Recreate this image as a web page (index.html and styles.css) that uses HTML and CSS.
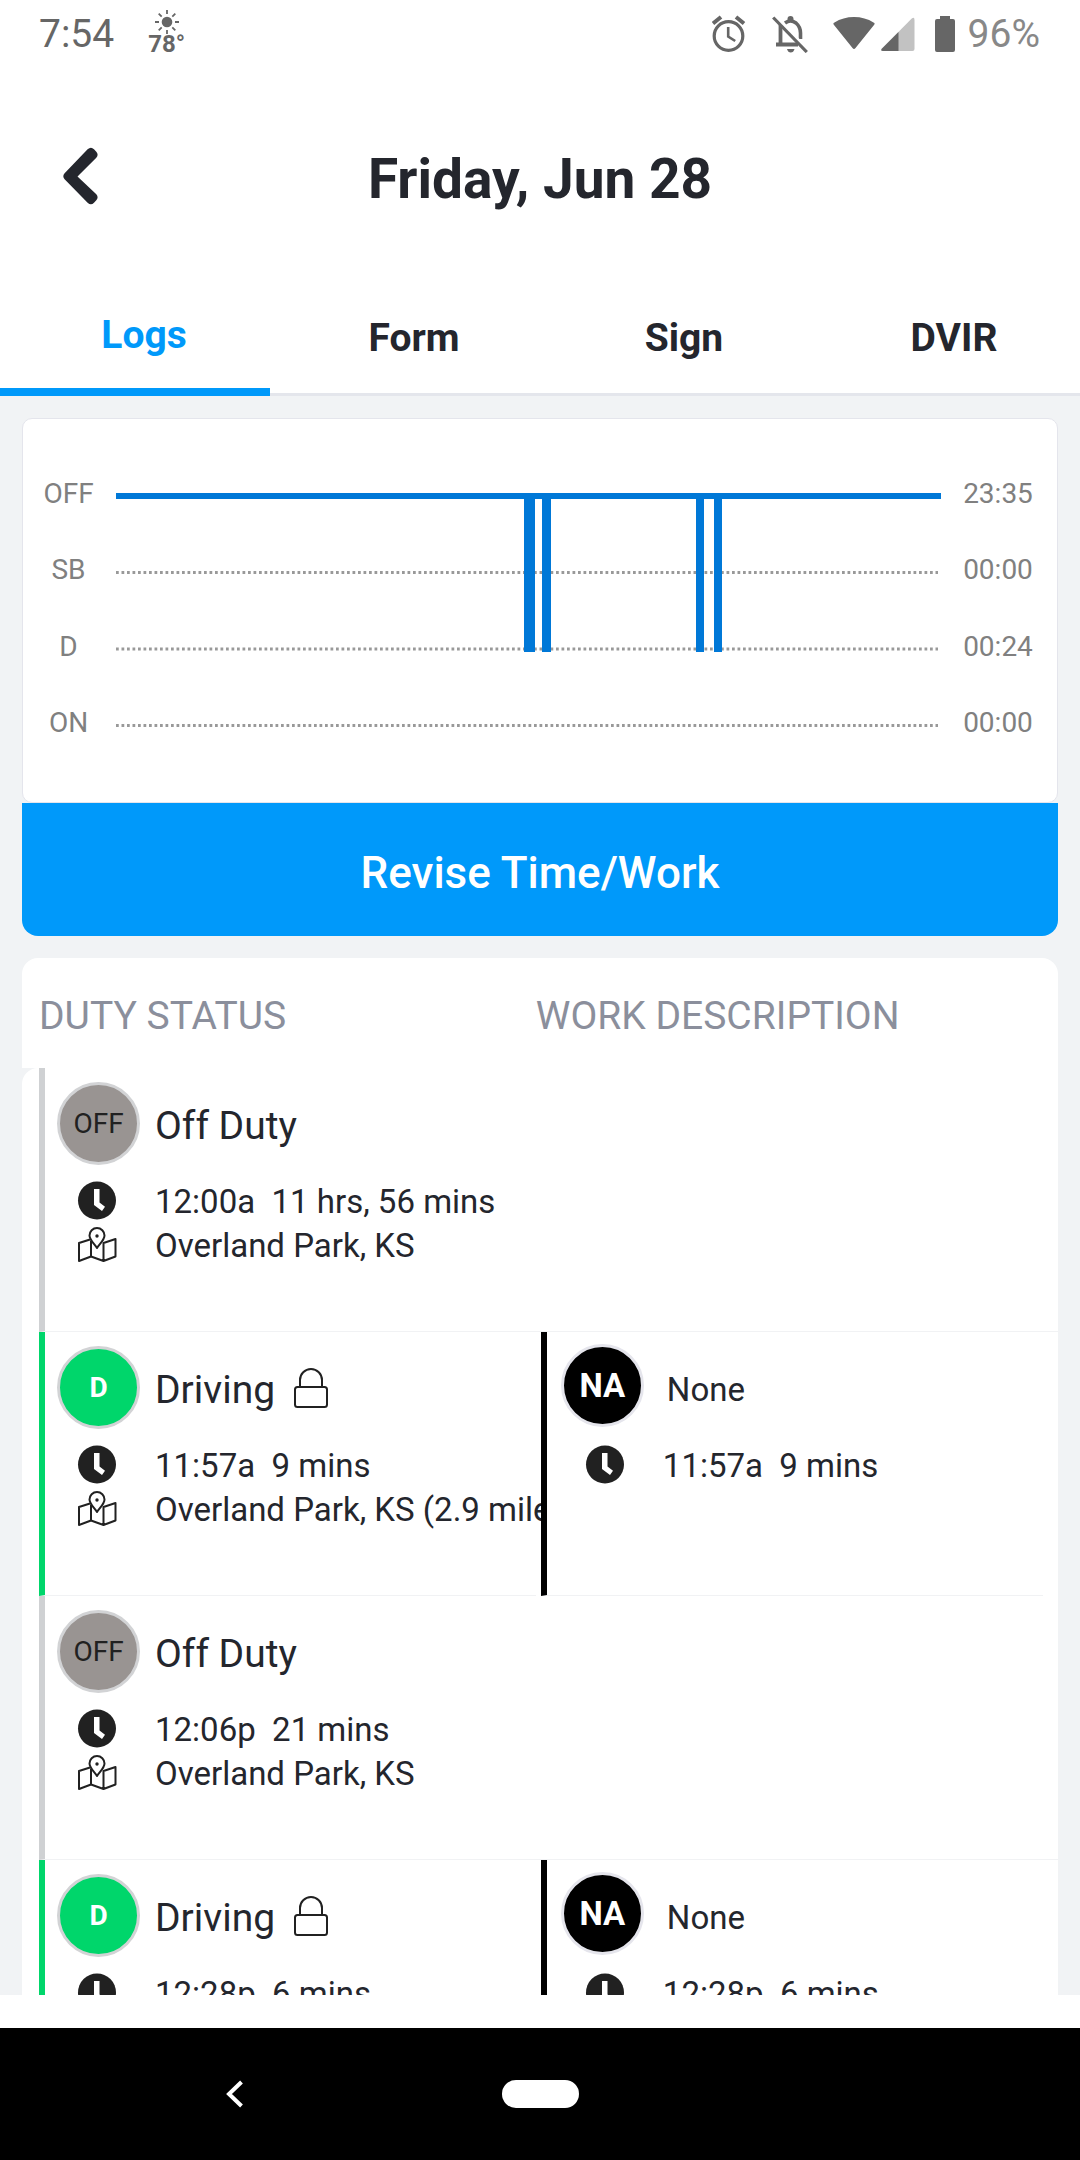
FILE: index.html
```html
<!DOCTYPE html>
<html lang="en">
<head>
  <meta charset="UTF-8" />
  <title>Driver Logs</title>
  <meta name="viewport" content="width=device-width, initial-scale=1.0" />

  <link rel="stylesheet" href="styles.css">
</head>
<body>
  <!-- Shared icons -->
  <svg class="sprite" aria-hidden="true">
    <symbol id="icon-clock" viewBox="0 0 40 44">
      <circle cx="20" cy="20.500" r="19" fill="#212121" />
      <path d="M17 9h5.500v13.500l5.500 4.200-3 4.300-8-6z" fill="#fff" />
    </symbol>
    <symbol id="icon-map" viewBox="0 0 40 44">
      <g fill="none" stroke="#212121" stroke-width="2" stroke-linejoin="round">
        <path d="M13 15.500L2 19v18l12-4.500 12.500 4.500 12-4.500V15l-12 4v18M14 17v15.500" />
        <path d="M20 24c-2.500-4-7.500-8-7.500-12.500a7.500 7.500 0 0 1 15 0c0 4.500-5 8.500-7.500 12.500z" fill="#fff" />
      </g>
      <circle cx="20" cy="12" r="1.700" fill="#212121" />
    </symbol>
    <symbol id="icon-lock" viewBox="0 0 36 42">
      <g fill="none" stroke="#212121" stroke-width="2">
        <rect x="2" y="20" width="32" height="20" rx="2.500" />
        <path d="M7 20v-7a11 11 0 0 1 22 0v7" />
      </g>
    </symbol>
  </svg>

  <div class="status-bar">
    <span class="clock">7:54</span>
    <span class="weather">
      <svg width="24" height="24" viewBox="0 0 24 24" aria-hidden="true">
        <circle cx="12" cy="12" r="5.300" fill="#666" />
        <path d="M12 0v4M12 20v4M0 12h4M20 12h4M3.700 3.700l3 3M17.300 17.300l3 3M3.700 20.300l3-3M17.300 6.700l3-3" stroke="#666" stroke-width="1.800" />
      </svg>
      <span class="temp">78°</span>
    </span>

    <div class="status-icons">
      <svg width="34" height="38" viewBox="0 0 34 38" aria-hidden="true">
        <g fill="none" stroke="#666" stroke-width="3.200">
          <circle cx="16.500" cy="21" r="14.300" />
          <path d="M1 8.500l8-6.500M32 8.500L24 2" stroke-width="4" />
          <path d="M16.200 12v9.500l7 4.500" stroke-width="2.600" />
        </g>
      </svg>
      <svg class="bell" width="36" height="38" viewBox="0 0 36 38" aria-hidden="true">
        <path d="M8.500 10v20M4 29.500h22" fill="none" stroke="#666" stroke-width="3.800" />
        <path d="M13 8q5.500-4 11 0 4.500 4 4.500 10v6" fill="none" stroke="#666" stroke-width="3.600" />
        <circle cx="18.500" cy="4" r="3" fill="#666" />
        <path d="M15 34h7.500q-1 3.600-3.750 3.600T15 34z" fill="#666" />
        <path d="M3.600 1.500l33 34" stroke="#fff" stroke-width="3" />
        <path d="M1.200 2.500l33.600 34.500" stroke="#666" stroke-width="3.200" />
      </svg>
      <svg class="wifi" width="42" height="38" viewBox="0 0 42 38" aria-hidden="true">
        <path d="M1 10Q-.5 8.500 1.500 7.500 10 2 21 2t19.500 5.500q2 1 .5 2.500L22.500 33q-1.500 1.800-3 0z" fill="#666" />
      </svg>
      <svg class="signal" width="34" height="38" viewBox="0 0 34 38" aria-hidden="true">
        <path d="M1 33.500L30.500 3.700Q33.500 1.500 33.500 5v29q0 2-2 2H2q-3 0-1-2.500z" fill="#c2c2c2" />
        <path d="M1 33.500L17.500 17v19H2q-3 0-1-2.500z" fill="#666" />
      </svg>
      <svg class="battery" width="20" height="38" viewBox="0 0 20 38" aria-hidden="true">
        <path d="M5 1h10v3h3q2 0 2 2v29q0 2-2 2H2q-2 0-2-2V6q0-2 2-2h3z" fill="#666" />
      </svg>
      <span class="percent">96%</span>
    </div>
  </div>

  <header class="header">
    <button class="back" aria-label="Back">
      <svg width="36" height="58" viewBox="0 0 36 58" aria-hidden="true">
        <path d="M24.600 2.200q3.400-3 6.400 0l2.300 2.500q2.600 3 0 6L14.500 29.500l18.800 17.800q2.600 3 0 6L31 55.800q-3 3-6.400 0L1.600 32.300q-2.600-3 0-6z" fill="#24262d" />
      </svg>
    </button>
    <h1>Friday, Jun 28</h1>
  </header>

  <nav class="tabs">
    <a href="#logs" class="tab active">Logs</a>
    <a href="#form" class="tab">Form</a>
    <a href="#sign" class="tab">Sign</a>
    <a href="#dvir" class="tab">DVIR</a>
  </nav>

  <main class="content">
    <section class="chart">
      <div class="chart-labels">
        <span>OFF</span>
        <span>SB</span>
        <span>D</span>
        <span>ON</span>
      </div>
      <svg class="plot" viewBox="0 0 825 306" preserveAspectRatio="none" role="img" aria-label="Hours of service">
        <path d="M0 117.500h822M0 194h822M0 270.500h822" stroke="#999" stroke-width="3" stroke-dasharray="2.750 2.750" />
        <g fill="#0078d7">
          <rect x="0" y="38" width="825" height="6" />
          <rect x="408" y="40" width="11" height="157" />
          <rect x="426" y="40" width="9" height="157" />
          <rect x="580" y="40" width="8" height="157" />
          <rect x="598" y="40" width="8" height="157" />
        </g>
      </svg>
      <div class="chart-labels">
        <span>23:35</span>
        <span>00:00</span>
        <span>00:24</span>
        <span>00:00</span>
      </div>
    </section>
    <button class="revise">Revise Time/Work</button>

    <table class="log">
      <thead>
        <tr>
          <th>DUTY STATUS</th>
          <th>WORK DESCRIPTION</th>
        </tr>
      </thead>
      <tbody>
        <tr>
          <td>
            <div class="duty off">
              <div class="entry-head"><span class="badge">OFF</span><span class="name">Off Duty</span></div>
              <div class="line"><svg class="icon"><use href="#icon-clock" /></svg>12:00a&nbsp; 11 hrs, 56 mins</div>
              <div class="line"><svg class="icon"><use href="#icon-map" /></svg>Overland Park, KS</div>
            </div>
          </td>
          <td class="empty"></td>
        </tr>
        <tr>
          <td>
            <div class="duty driving">
              <div class="entry-head"><span class="badge">D</span><span class="name">Driving</span><svg class="lock"><use href="#icon-lock" /></svg></div>
              <div class="line"><svg class="icon"><use href="#icon-clock" /></svg>11:57a&nbsp; 9 mins</div>
              <div class="line"><svg class="icon"><use href="#icon-map" /></svg>Overland Park, KS (2.9 miles)</div>
            </div>
          </td>
          <td>
            <div class="work">
              <div class="entry-head"><span class="badge">NA</span><span class="name">None</span></div>
              <div class="line"><svg class="icon"><use href="#icon-clock" /></svg>11:57a&nbsp; 9 mins</div>
            </div>
          </td>
        </tr>
        <tr>
          <td>
            <div class="duty off">
              <div class="entry-head"><span class="badge">OFF</span><span class="name">Off Duty</span></div>
              <div class="line"><svg class="icon"><use href="#icon-clock" /></svg>12:06p&nbsp; 21 mins</div>
              <div class="line"><svg class="icon"><use href="#icon-map" /></svg>Overland Park, KS</div>
            </div>
          </td>
          <td class="empty"></td>
        </tr>
        <tr>
          <td>
            <div class="duty driving">
              <div class="entry-head"><span class="badge">D</span><span class="name">Driving</span><svg class="lock"><use href="#icon-lock" /></svg></div>
              <div class="line"><svg class="icon"><use href="#icon-clock" /></svg>12:28p&nbsp; 6 mins</div>
            </div>
          </td>
          <td>
            <div class="work">
              <div class="entry-head"><span class="badge">NA</span><span class="name">None</span></div>
              <div class="line"><svg class="icon"><use href="#icon-clock" /></svg>12:28p&nbsp; 6 mins</div>
            </div>
          </td>
        </tr>
      </tbody>
    </table>
  </main>

  <footer class="system-nav">
    <button class="nav-back" aria-label="System back">
      <svg width="18" height="28" viewBox="0 0 18 28" aria-hidden="true">
        <path d="M15.500 2L3 14l12.500 12" fill="none" stroke="#fff" stroke-width="4" />
      </svg>
    </button>
    <button class="nav-home" aria-label="Home"></button>
  </footer>
</body>
</html>
```
FILE: styles.css
```css
* {
  box-sizing: border-box;
}

body {
  font-family: Roboto, 'Liberation Sans', sans-serif;
  background-color: #fff;
  color: #24262d;
  margin: 0;
  height: 100vh;
  display: flex;
  flex-direction: column;
}

button {
  font-family: inherit;
  border: none;
  padding: 0;
  cursor: pointer;
}

svg {
  display: block;
  flex-shrink: 0;
}

.sprite {
  position: absolute;
  width: 0;
  height: 0;
}

/* Status bar */
.status-bar {
  display: flex;
  align-items: center;
  height: 68px;
  padding: 0 40px 0 39px;
  color: #666;
  font-size: 39px;
}

.weather {
  display: flex;
  flex-direction: column;
  align-items: center;
  margin-left: 34px;
  padding-bottom: 4px;
}

.temp {
  font-size: 24px;
  font-weight: 700;
  line-height: 20px;
}

.status-icons {
  display: flex;
  align-items: center;
  margin-left: auto;
}

.bell {
  margin-left: 26px;
}

.wifi {
  margin-left: 25px;
}

.signal {
  margin-left: 6px;
}

.battery {
  margin-left: 20px;
}

.percent {
  margin-left: 13px;
  color: #888;
}

/* Header */
.header {
  display: grid;
  grid-template-columns: 1fr auto 1fr;
  align-items: center;
  height: 214px;
}

.back {
  justify-self: start;
  margin-left: 63px;
  padding-top: 2px;
  background: none;
}

h1 {
  margin: 0;
  padding-top: 8px;
  font-size: 55px;
  font-weight: 700;
}

.tabs {
  display: flex;
}

.tab {
  flex: 1;
  display: flex;
  align-items: center;
  justify-content: center;
  height: 114px;
  padding-left: 18px;
  border-bottom: 3px solid #e4e6ec;
  color: inherit;
  font-size: 39px;
  font-weight: 700;
  text-decoration: none;
}

.tab.active {
  color: #0099fa;
  border-bottom: 8px solid #0099fa;
}

/* Scrolling content */
.content {
  flex: 1;
  min-height: 0;
  overflow: hidden;
  padding: 22px 22px 0;
  background-color: #f1f3f5;
}

.chart {
  display: grid;
  grid-template-columns: 93px 1fr 116px;
  padding: 36px 0 41px;
  background: #fff;
  border: 1px solid #e4e5ec;
  border-radius: 10px;
}

.chart-labels {
  display: grid;
  grid-template-rows: repeat(4, 1fr);
  place-items: center;
  padding-right: 2px;
  color: #808080;
  font-size: 28px;
}

.plot {
  width: 100%;
  height: 306px;
}

.revise {
  display: block;
  width: 100%;
  height: 133px;
  padding-top: 6px;
  background-color: #0099fa;
  border-radius: 0 0 16px 16px;
  color: #fff;
  font-size: 44px;
  font-weight: 500;
}

/* Log table */
.log {
  width: 100%;
  margin-top: 22px;
  border-spacing: 0;
  table-layout: fixed;
}

.log th {
  padding: 35px 0 29px;
  background: #fff;
  color: #8b8f9c;
  font-size: 39px;
  font-weight: 400;
  line-height: 46px;
  text-align: left;
}

.log th:first-child {
  width: 49.6%;
  padding-left: 17px;
  border-top-left-radius: 16px;
}

.log th:last-child {
  border-top-right-radius: 16px;
}

.log td {
  height: 264px;
  padding: 0 15px 0 5px;
  background: #fff;
  vertical-align: top;
}

.log td:first-child {
  padding: 0 0 0 17px;
}

.log tbody tr:first-child td:first-child {
  border-top-left-radius: 16px;
}

.log .empty {
  border-bottom: 1px solid #f1f2f4;
}

.duty,
.work {
  height: 264px;
  overflow: hidden;
  border-left: 6px solid #cfd1d3;
  border-bottom: 1px solid #f1f2f4;
  white-space: nowrap;
}

.duty {
  margin-right: -5px;
  padding-top: 14px;
}

.driving {
  border-left-color: #00d66b;
}

.work {
  padding-top: 12px;
  border-left-color: #000;
}

.entry-head {
  display: flex;
  align-items: center;
  gap: 15px;
  margin-bottom: 15px;
  padding-left: 12px;
}

.work .entry-head {
  gap: 23px;
  margin-bottom: 17px;
  padding-left: 14px;
}

.badge {
  display: flex;
  align-items: center;
  justify-content: center;
  width: 83px;
  height: 83px;
  border: 3px solid #d2d3d5;
  border-radius: 50%;
  background-color: #999492;
  color: #212121;
  font-size: 28px;
}

.driving .badge {
  background-color: #00d66b;
  color: #fff;
  font-weight: 700;
}

.work .badge {
  border-color: #e5e5ec;
  background-color: #000;
  color: #fff;
  font-size: 33px;
  font-weight: 700;
}

.name {
  padding-top: 4px;
  font-size: 39px;
}

.work .name {
  padding-top: 8px;
  font-size: 33px;
}

.lock {
  width: 36px;
  height: 42px;
  margin-left: 3px;
}

.line {
  display: flex;
  gap: 38px;
  padding-left: 32px;
  font-size: 33px;
  line-height: 44px;
}

.work .line {
  padding-left: 38px;
}

.icon {
  width: 40px;
  height: 44px;
}

/* System navigation */
.system-nav {
  display: grid;
  grid-template-columns: 1fr auto 1fr;
  align-items: center;
  height: 132px;
  margin-top: 33px;
  background-color: #000;
}

.nav-back {
  justify-self: center;
  background: none;
  padding: 0 16px 0 0;
  margin-right: 16px;
}

.nav-home {
  grid-column: 2;
  width: 77px;
  height: 28px;
  border-radius: 14px;
  background-color: #fff;
}
```
